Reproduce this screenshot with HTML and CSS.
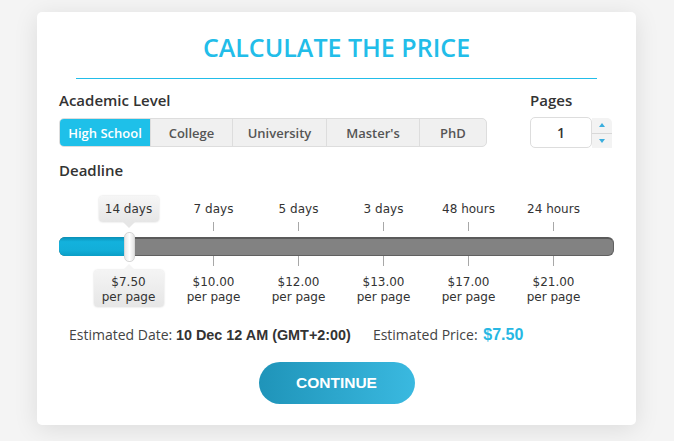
FILE: index.html
```html
<!DOCTYPE html>
<html>
<head>
<meta charset="utf-8">
<link rel="stylesheet" href="styles.css">
</head>
<body>
<div class="card">
  <h1 class="title">CALCULATE THE PRICE</h1>
  <div class="rule"></div>
  <div class="top-row">
    <div class="level">
      <div class="label">Academic Level</div>
      <div class="seg">
        <div class="seg-btn active">High School</div>
        <div class="seg-btn">College</div>
        <div class="seg-btn">University</div>
        <div class="seg-btn">Master's</div>
        <div class="seg-btn">PhD</div>
      </div>
    </div>
    <div class="pages">
      <div class="label">Pages</div>
      <div class="spin">
        <div class="spin-val">1</div>
        <div class="spin-btns">
          <div class="spin-up"><span class="tri-up"></span></div>
          <div class="spin-down"><span class="tri-down"></span></div>
        </div>
      </div>
    </div>
  </div>
  <div class="label deadline">Deadline</div>
  <div class="slider">
    <div class="marks">
      <div class="mark"><div class="mark-label current">14 days</div><div class="tick hidden"></div></div>
      <div class="mark"><div class="mark-label">7 days</div><div class="tick"></div></div>
      <div class="mark"><div class="mark-label">5 days</div><div class="tick"></div></div>
      <div class="mark"><div class="mark-label">3 days</div><div class="tick"></div></div>
      <div class="mark"><div class="mark-label">48 hours</div><div class="tick"></div></div>
      <div class="mark"><div class="mark-label">24 hours</div><div class="tick"></div></div>
    </div>
    <div class="track">
      <div class="fill"></div>
      <div class="handle"></div>
    </div>
    <div class="marks">
      <div class="mark"><div class="tick low hidden"></div><div class="price current">$7.50<br>per page</div></div>
      <div class="mark"><div class="tick low"></div><div class="price">$10.00<br>per page</div></div>
      <div class="mark"><div class="tick low"></div><div class="price">$12.00<br>per page</div></div>
      <div class="mark"><div class="tick low"></div><div class="price">$13.00<br>per page</div></div>
      <div class="mark"><div class="tick low"></div><div class="price">$17.00<br>per page</div></div>
      <div class="mark"><div class="tick low"></div><div class="price">$21.00<br>per page</div></div>
    </div>
  </div>
  <div class="estimate">
    <span class="est-item">Estimated Date: <b class="est-date">10 Dec 12 AM (GMT+2:00)</b></span>
    <span class="est-item">Estimated Price: <b class="est-price">$7.50</b></span>
  </div>
  <div class="actions">
    <button class="continue">CONTINUE</button>
  </div>
</div>
</body>
</html>
```

FILE: styles.css
```css
* { box-sizing: border-box; }
html, body { margin: 0; padding: 0; }
body {
  background: #f4f4f4;
  padding-top: 12px;
  font-family: "Open Sans", sans-serif;
  color: #333;
  width: 674px;
  height: 441px;
  overflow: hidden;
}
.card {
  margin-left: 37px;
  width: 599px;
  background: #fff;
  border-radius: 5px;
  box-shadow: 0 4px 24px rgba(0,0,0,0.10);
  padding: 0 22px 21px;
}
.title {
  margin: 0;
  padding-top: 20px;
  font-size: 25px;
  line-height: 30px;
  font-weight: 600;
  color: #22bde9;
  text-align: center;
}
.rule {
  margin: 16px 17px 0;
  height: 1px;
  background: #22bde9;
}
.top-row {
  display: flex;
  justify-content: space-between;
  margin-top: 11px;
}
.label {
  font-size: 15px;
  line-height: 20px;
  font-weight: 600;
  color: #333;
}
.level .label { margin-bottom: 8px; }
.seg {
  display: grid;
  grid-template-columns: 90px 82px 94px 93px 67px;
  height: 29px;
  border: 1px solid #ddd;
  border-radius: 5px;
  overflow: hidden;
  background: #f0f0f0;
}
.seg-btn {
  display: flex;
  align-items: center;
  justify-content: center;
  font-size: 13px;
  font-weight: 600;
  color: #555;
  border-left: 1px solid #ddd;
}
.seg-btn:first-child { border-left: none; }
.seg-btn.active {
  background: #1ec0e9;
  color: #fff;
}
.pages {
  width: 82px;
  margin-right: 2px;
}
.pages .label { margin-bottom: 7px; }
.spin {
  display: flex;
  height: 31px;
}
.spin-val {
  width: 62px;
  border: 1px solid #ddd;
  border-radius: 5px;
  display: flex;
  align-items: center;
  justify-content: center;
  font-size: 14px;
  font-weight: 600;
  color: #333;
}
.spin-btns {
  width: 20px;
  margin-top: 1px;
  height: 30px;
  display: flex;
  flex-direction: column;
  background: #f3f3f3;
  border-radius: 0 5px 0 0;
}
.spin-up, .spin-down {
  flex: 1;
  display: flex;
  align-items: center;
  justify-content: center;
}
.spin-up { border-bottom: 1px solid #d8d8d8; }
.tri-up, .tri-down {
  width: 0; height: 0;
  border-left: 3px solid transparent;
  border-right: 3px solid transparent;
}
.tri-up { border-bottom: 4px solid #3aaede; }
.tri-down { border-top: 4px solid #3aaede; }
.deadline { margin-top: 12px; }
.slider {
  margin-top: 16px;
}
.marks {
  display: grid;
  grid-template-columns: repeat(6, 85px);
  padding-left: 27px;
}
.mark {
  display: flex;
  flex-direction: column;
  align-items: center;
  font-family: "DejaVu Sans", Verdana, sans-serif;
  font-size: 12px;
  color: #333;
}
.mark-label {
  height: 26px;
  line-height: 26px;
  white-space: nowrap;
}
.mark-label.current {
  position: relative;
  width: 60px;
  text-align: center;
  border-radius: 4px;
  background: linear-gradient(#f6f6f6, #e6e6e6);
  box-shadow: 0 0 2px rgba(0,0,0,0.18);
}
.mark-label.current::after {
  content: "";
  position: absolute;
  left: 50%;
  top: 26px;
  margin-left: -6px;
  border-left: 6px solid transparent;
  border-right: 6px solid transparent;
  border-top: 6px solid #e6e6e6;
}
.tick {
  width: 1px;
  height: 9px;
  background: #a8a8a8;
}
.tick.low { height: 10px; }
.tick.hidden { visibility: hidden; }
.track {
  position: relative;
  margin-top: 6px;
  height: 19px;
  background: #828282;
  border: 1px solid #606060;
  border-top: 2px solid #5a5a5a;
  border-radius: 6px;
}
.fill {
  position: absolute;
  left: -1px;
  top: -2px;
  bottom: -1px;
  width: 70px;
  border-radius: 6px 0 0 6px;
  background: linear-gradient(#0a8fb6 0%, #13b2dd 25%, #12aed8 70%, #0b9ec6 100%);
}
.handle {
  position: absolute;
  left: 64px;
  top: -7px;
  width: 11px;
  height: 30px;
  border-radius: 5px;
  background: linear-gradient(90deg, #e9e9e9, #ffffff 50%, #e4e4e4);
  border: 1px solid #d6d6d6;
}
.price {
  margin-top: 4px;
  height: 37px;
  padding-top: 5px;
  line-height: 15px;
  text-align: center;
  white-space: nowrap;
}
.price.current {
  position: relative;
  width: 70px;
  border-radius: 4px;
  background: linear-gradient(#f4f4f4, #e6e6e6);
  box-shadow: 0 0 2px rgba(0,0,0,0.18);
}
.price.current::before {
  content: "";
  position: absolute;
  left: 50%;
  top: -6px;
  margin-left: -6px;
  border-left: 6px solid transparent;
  border-right: 6px solid transparent;
  border-bottom: 6px solid #f4f4f4;
}
.estimate {
  margin-top: 18px;
  padding-left: 10px;
  font-size: 14px;
  line-height: 20px;
  color: #444;
  display: flex;
  gap: 22px;
}
.est-date {
  font-family: "Liberation Sans", Arial, sans-serif;
  font-size: 14.4px;
  font-weight: 700;
  color: #333;
}
.est-price {
  margin-left: 2px;
  font-family: "Liberation Sans", Arial, sans-serif;
  font-size: 16px;
  font-weight: 700;
  color: #27b7e3;
}
.actions {
  display: flex;
  justify-content: center;
  margin-top: 17px;
}
.continue {
  width: 156px;
  height: 42px;
  border: none;
  border-radius: 21px;
  background: linear-gradient(90deg, #1f94b9, #3ab9e0);
  color: #fff;
  font-family: "Liberation Sans", Arial, sans-serif;
  font-size: 15.5px;
  font-weight: 700;
  padding: 0;
}
```
